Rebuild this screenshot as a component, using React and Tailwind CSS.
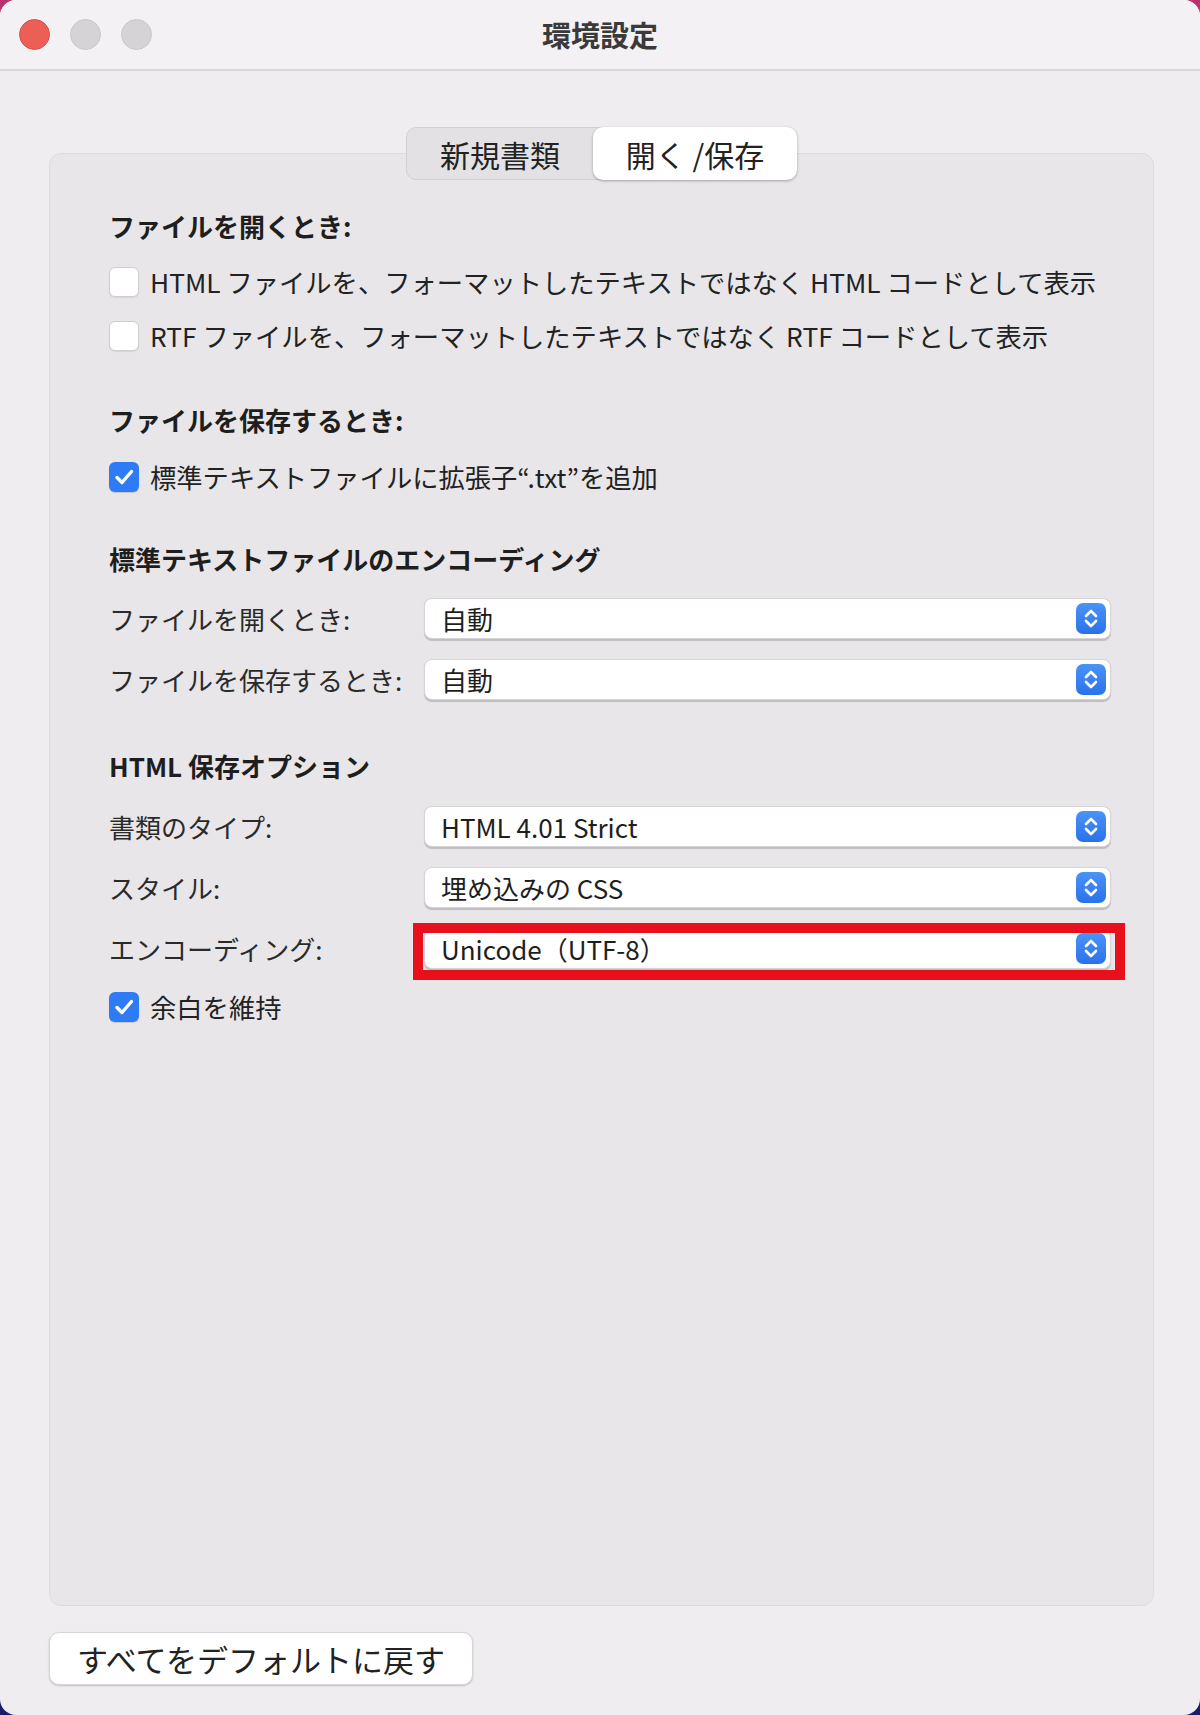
import React from "react";

function Stepper() {
  return (
    <svg width="30" height="31" viewBox="0 0 30 31" className="shrink-0">
      <defs>
        <linearGradient id="stg" x1="0" y1="0" x2="0" y2="1">
          <stop offset="0" stopColor="#4a93f8" />
          <stop offset="1" stopColor="#2a72ea" />
        </linearGradient>
      </defs>
      <rect x="0" y="0" width="30" height="31" rx="7" fill="url(#stg)" />
      <path d="M10 13 L15 8 L20 13" fill="none" stroke="#fff" strokeWidth="2.6" strokeLinecap="round" strokeLinejoin="round" />
      <path d="M10 18 L15 23 L20 18" fill="none" stroke="#fff" strokeWidth="2.6" strokeLinecap="round" strokeLinejoin="round" />
    </svg>
  );
}

function Checkbox({ checked }) {
  if (checked) {
    return (
      <div className="w-[30px] h-[30px] shrink-0 rounded-[6px] bg-[#2f7bf5] flex items-center justify-center shadow-[0_1px_1px_rgba(0,0,0,0.15)]">
        <svg width="24" height="24" viewBox="0 0 24 24">
          <path d="M5 12.5 L10 17.5 L19.5 6.5" fill="none" stroke="#fff" strokeWidth="3.4" strokeLinecap="round" strokeLinejoin="round" />
        </svg>
      </div>
    );
  }
  return (
    <div className="w-[30px] h-[30px] shrink-0 rounded-[6px] bg-white border border-[#cfcdd0] shadow-[0_1px_1px_rgba(0,0,0,0.08)]" />
  );
}

function CheckRow({ checked, label, className }) {
  return (
    <div className={"h-[40px] flex items-center gap-[11px] " + className}>
      <Checkbox checked={checked} />
      <span className="text-[26.3px] text-[#222] leading-none">{label}</span>
    </div>
  );
}

function Header({ children, className }) {
  return (
    <div className={"h-[40px] flex items-center text-[26px] font-bold text-[#1e1e1e] leading-none " + className}>
      {children}
    </div>
  );
}

function Popup({ value }) {
  return (
    <div className="flex-1 h-[41px] bg-white rounded-[8px] border border-[#d6d4d7] shadow-[0_1.5px_1px_rgba(0,0,0,0.18)] flex items-center pl-[16px] pr-[4px]">
      <span className="flex-1 text-[26px] text-[#1e1e1e] leading-none">{value}</span>
      <Stepper />
    </div>
  );
}

function PopupRow({ label, value, className, highlight }) {
  return (
    <div className={"h-[41px] flex items-center " + className}>
      <div className="w-[315px] shrink-0 text-[26px] text-[#2a2a2a] leading-none">{label}</div>
      {highlight ? (
        <div className="flex-1 relative flex">
          <Popup value={value} />
          <div className="absolute left-[-11px] right-[-14px] top-[-5px] bottom-[-11px] border-[10px] border-[#e8101a] pointer-events-none" />
        </div>
      ) : (
        <Popup value={value} />
      )}
    </div>
  );
}

export default function App() {
  return (
    <div className="w-[1200px] h-[1715px] bg-[linear-gradient(180deg,#b8336e_0%,#6a2a8a_55%,#1b1a6b_100%)] font-['Noto_Sans_CJK_JP',sans-serif]">
      <div className="w-full h-full rounded-[16px] bg-[#efedf0] flex flex-col overflow-hidden">
        {/* Title bar */}
        <div className="h-[71px] shrink-0 bg-[#f3f1f4] border-b-2 border-[#d8d6d9] grid grid-cols-[1fr_auto_1fr] items-center">
          <div className="flex items-center gap-[20px] pl-[19px]">
            <div className="w-[31px] h-[31px] rounded-full bg-[#ec5f57] border border-[#dc4e46]" />
            <div className="w-[31px] h-[31px] rounded-full bg-[#d5d3d6] border border-[#c9c7ca]" />
            <div className="w-[31px] h-[31px] rounded-full bg-[#d5d3d6] border border-[#c9c7ca]" />
          </div>
          <div className="text-[29px] font-bold text-[#3a3a3a] leading-none">環境設定</div>
          <div />
        </div>

        {/* Body */}
        <div className="pl-[49px] pr-[46px] flex flex-col">
          {/* Tabs */}
          <div className="mt-[56px] -mb-[27px] relative z-10 flex justify-center">
            <div className="flex h-[53px] rounded-[10px] bg-[#e3e1e4] border border-[#d2d0d3]">
              <div className="w-[186px] flex items-center justify-center text-[30px] text-[#222] leading-none">新規書類</div>
              <div className="w-[204px] -my-px -mr-px flex items-center justify-center bg-white rounded-[10px] shadow-[0_1px_3px_rgba(0,0,0,0.3)] text-[30px] text-[#222] leading-none">開く /保存</div>
            </div>
          </div>

          {/* Group box */}
          <div className="h-[1453px] rounded-[12px] bg-[#e8e6e9] border border-[#dddbde] pt-[52px] pl-[59px] pr-[42px] flex flex-col">
            <Header>ファイルを開くとき:</Header>
            <CheckRow className="mt-[16px]" checked={false} label="HTML ファイルを、フォーマットしたテキストではなく HTML コードとして表示" />
            <CheckRow className="mt-[14px]" checked={false} label="RTF ファイルを、フォーマットしたテキストではなく RTF コードとして表示" />

            <Header className="mt-[44px]">ファイルを保存するとき:</Header>
            <CheckRow className="mt-[17px]" checked={true} label="標準テキストファイルに拡張子“.txt”を追加" />

            <Header className="mt-[42px]">標準テキストファイルのエンコーディング</Header>
            <PopupRow className="mt-[19px]" label="ファイルを開くとき:" value="自動" />
            <PopupRow className="mt-[20px]" label="ファイルを保存するとき:" value="自動" />

            <Header className="mt-[46px]">HTML 保存オプション</Header>
            <PopupRow className="mt-[20px]" label="書類のタイプ:" value="HTML 4.01 Strict" />
            <PopupRow className="mt-[20px]" label="スタイル:" value="埋め込みの CSS" />
            <PopupRow className="mt-[20px]" label="エンコーディング:" value="Unicode（UTF-8）" highlight />
            <CheckRow className="mt-[18px]" checked={true} label="余白を維持" />
          </div>

          {/* Button */}
          <div className="mt-[26px] w-[424px] h-[53px] bg-white rounded-[10px] border border-[#d6d4d7] shadow-[0_1px_2px_rgba(0,0,0,0.2)] flex items-center justify-center text-[31px] text-[#222] leading-none">
            すべてをデフォルトに戻す
          </div>
        </div>
      </div>
    </div>
  );
}
